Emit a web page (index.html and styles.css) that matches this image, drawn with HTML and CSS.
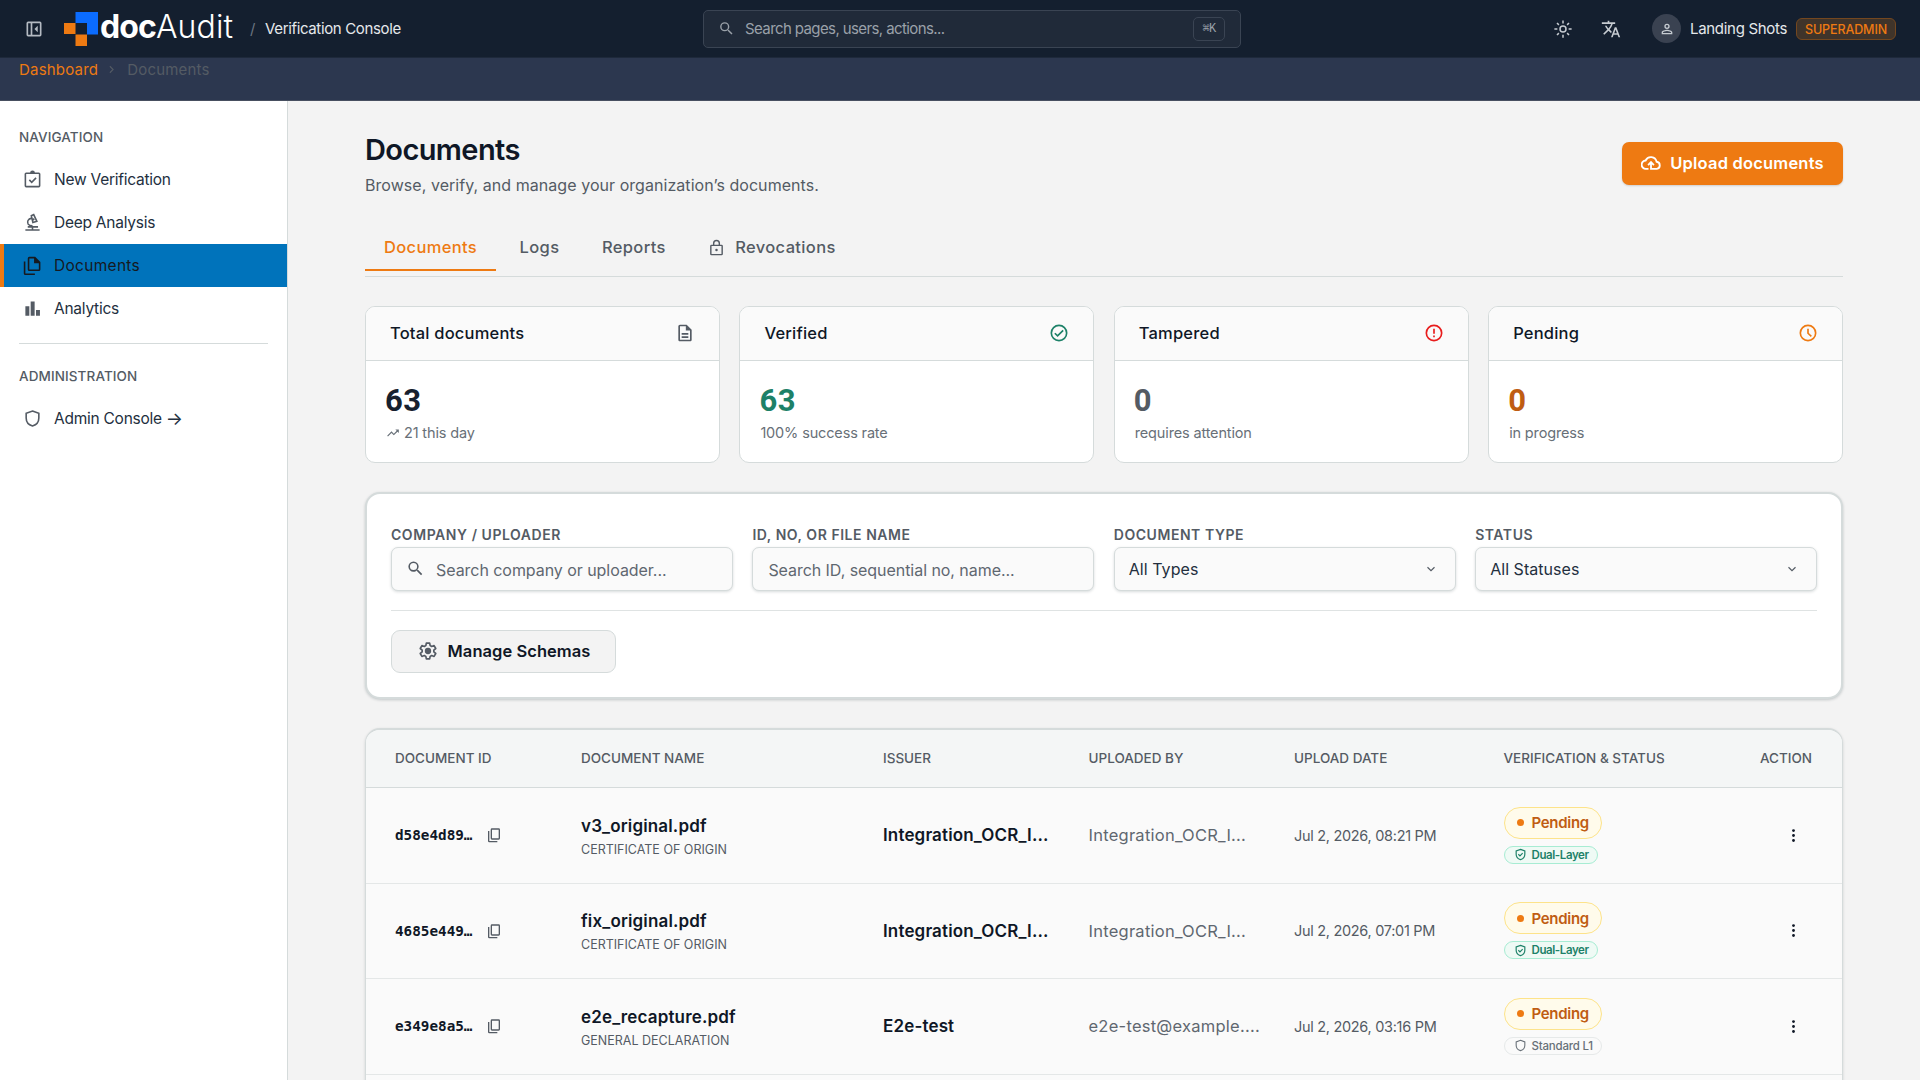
FILE: index.html
```html
<!DOCTYPE html>
<html lang="en">
<head>
  <meta charset="UTF-8" />
  <meta name="viewport" content="width=device-width, initial-scale=1" />
  <title>Documents - docAudit</title>
  <link rel="stylesheet" href="styles.css">
</head>
<body>
  <!-- icon sprite -->
  <svg class="sprite" aria-hidden="true">
    <symbol id="i-panel" viewBox="0 0 24 24"><path fill="none" stroke="currentColor" stroke-width="2" d="M5 4h14a1 1 0 0 1 1 1v14a1 1 0 0 1-1 1H5a1 1 0 0 1-1-1V5a1 1 0 0 1 1-1zM9 4v16"/><path d="M16.5 8v8l-4-4z"/></symbol>
    <symbol id="i-search" viewBox="0 0 24 24"><path d="M15.5 14h-.79l-.28-.27A6.47 6.47 0 0 0 16 9.5 6.5 6.5 0 1 0 9.5 16c1.61 0 3.09-.59 4.23-1.57l.27.28v.79l5 4.99L20.49 19l-4.99-5zm-6 0a4.5 4.5 0 1 1 0-9 4.5 4.5 0 0 1 0 9z"/></symbol>
    <symbol id="i-sun" viewBox="0 0 24 24"><g fill="none" stroke="currentColor" stroke-width="2"><circle cx="12" cy="12" r="4"/><path d="M12 .5v4M12 19.5v4M.5 12h4M19.5 12h4M4 4l2.5 2.5M17.5 17.5L20 20M4 20l2.5-2.5M17.5 6.5L20 4"/></g></symbol>
    <symbol id="i-translate" viewBox="0 0 24 24"><path d="M12.87 15.07l-2.54-2.51.03-.03A17.52 17.52 0 0 0 14.07 6H17V4h-7V2H8v2H1v1.99h11.17C11.5 7.92 10.44 9.75 9 11.35 8.07 10.32 7.3 9.19 6.69 8h-2c.73 1.63 1.73 3.17 2.98 4.56l-5.09 5.02L4 19l5-5 3.11 3.11.76-2.04zM18.5 10h-2L12 22h2l1.12-3h4.75L21 22h2l-4.5-12zm-2.62 7l1.62-4.33L19.12 17h-3.24z"/></symbol>
    <symbol id="i-person" viewBox="0 0 24 24"><path d="M12 4a4 4 0 1 0 0 8 4 4 0 0 0 0-8zm0 6a2 2 0 1 1 0-4 2 2 0 0 1 0 4zm0 3c-2.67 0-8 1.34-8 4v3h16v-3c0-2.66-5.33-4-8-4zm6 5H6v-.99c.2-.72 3.3-2.01 6-2.01s5.8 1.29 6 2v1z"/></symbol>
    <symbol id="i-clipboard" viewBox="0 0 24 24"><path fill="none" stroke="currentColor" stroke-width="2" d="M4 4h16a1 1 0 0 1 1 1v15a1 1 0 0 1-1 1H4a1 1 0 0 1-1-1V5a1 1 0 0 1 1-1zM8 12.5l3 3 5.5-5.5"/><path d="M9 3.5a3 3 0 0 1 6 0L15.5 5h-7z"/></symbol>
    <symbol id="i-microscope" viewBox="0 0 24 24"><path fill="none" stroke="currentColor" stroke-width="2" d="M3 21.5h18M6 17.5h13M12 17v4M10.5 3.5l3-1.5 4 8.5-5 1.5zM11 6.5c-5 1-6 4.5-4.5 7.5 1 1.5 2.5 2 5.5 2"/><circle cx="13" cy="8" r="1.5"/></symbol>
    <symbol id="i-files" viewBox="0 0 24 24"><path fill="none" stroke="currentColor" stroke-width="2" d="M8 2h7l6 6v9a1 1 0 0 1-1 1H8a1 1 0 0 1-1-1V3a1 1 0 0 1 1-1zM2 7v15a1 1 0 0 0 1 1h12"/><path d="M14 1.5l7.5 7.5H14z"/></symbol>
    <symbol id="i-bars" viewBox="0 0 24 24"><path d="M3 9h5v12H3zM9.7 3h5v18h-5zM16.4 14h5v7h-5z"/></symbol>
    <symbol id="i-shield" viewBox="0 0 24 24"><path fill="none" stroke="currentColor" stroke-width="2" d="M12 2.5l8 3v6c0 5-3.3 8.7-8 10-4.7-1.3-8-5-8-10v-6z"/></symbol>
    <symbol id="i-shield-check" viewBox="0 0 24 24"><path fill="none" stroke="currentColor" stroke-width="2.2" d="M12 2.5l8 3v6c0 5-3.3 8.7-8 10-4.7-1.3-8-5-8-10v-6zM8 11.5l3 3 5-5"/></symbol>
    <symbol id="i-upload" viewBox="0 0 24 24"><path fill="none" stroke="currentColor" stroke-width="2.2" d="M9 19H6a5 5 0 0 1-.5-10A7 7 0 0 1 18.7 10.5 4.3 4.3 0 0 1 19 19h-7v-8M8.5 14.5L12 11l3.5 3.5"/></symbol>
    <symbol id="i-lock" viewBox="0 0 24 24"><path fill="none" stroke="currentColor" stroke-width="2" d="M5 9h14a1 1 0 0 1 1 1v11a1 1 0 0 1-1 1H5a1 1 0 0 1-1-1V10a1 1 0 0 1 1-1zM8 9V6a4 4 0 0 1 8 0v3"/><circle cx="12" cy="15.5" r="1.8"/></symbol>
    <symbol id="i-doc" viewBox="0 0 24 24"><path d="M8 16h8v2H8zm0-4h8v2H8zm6-10H6c-1.1 0-2 .9-2 2v16c0 1.1.89 2 1.99 2H18c1.1 0 2-.9 2-2V8l-6-6zm4 18H6V4h7v5h5v11z"/></symbol>
    <symbol id="i-check" viewBox="0 0 24 24"><path fill="none" stroke="currentColor" stroke-width="2" d="M7 12.3l3.3 3.2L17 8.8"/><circle cx="12" cy="12" r="9.2" fill="none" stroke="currentColor" stroke-width="2"/></symbol>
    <symbol id="i-alert" viewBox="0 0 24 24"><circle cx="12" cy="12" r="9.2" fill="none" stroke="currentColor" stroke-width="2"/><path d="M11 7h2v6h-2zM11 15h2v2h-2z"/></symbol>
    <symbol id="i-clock" viewBox="0 0 24 24"><path fill="none" stroke="currentColor" stroke-width="2" d="M12 7v5.3l4 3.7"/><circle cx="12" cy="12" r="9.2" fill="none" stroke="currentColor" stroke-width="2"/></symbol>
    <symbol id="i-trend" viewBox="0 0 24 24"><path d="M16 6l2.29 2.29-4.88 4.88-4-4L2 16.59 3.41 18l6-6 4 4 6.3-6.29L22 12V6z"/></symbol>
    <symbol id="i-gear" viewBox="0 0 24 24"><path fill="none" stroke="currentColor" stroke-width="2" stroke-linejoin="round" d="M10 2.5h4l.6 3 1.8 1 2.9-1 2 3.5-2.3 2v2l2.3 2-2 3.5-2.9-1-1.8 1-.6 3h-4l-.6-3-1.8-1-2.9 1-2-3.5 2.3-2v-2l-2.3-2 2-3.5 2.9 1 1.8-1z"/><circle cx="12" cy="12" r="3.8"/></symbol>
    <symbol id="i-copy" viewBox="0 0 24 24"><path fill="none" stroke="currentColor" stroke-width="2" d="M9 3h10a1 1 0 0 1 1 1v13a1 1 0 0 1-1 1H9a1 1 0 0 1-1-1V4a1 1 0 0 1 1-1zM4 6v15a1 1 0 0 0 1 1h12"/></symbol>
    <symbol id="i-chevron" viewBox="0 0 24 24"><path fill="none" stroke="currentColor" stroke-width="2" d="M6 9l6 6 6-6"/></symbol>
    <symbol id="i-more" viewBox="0 0 24 24"><circle cx="12" cy="5" r="2"/><circle cx="12" cy="12" r="2"/><circle cx="12" cy="19" r="2"/></symbol>
  </svg>

  <header class="topbar">
    <svg class="icon panel-toggle"><use href="#i-panel"/></svg>
    <div class="logo">
      <svg class="logo-mark" viewBox="0 0 34 34">
        <path fill="#0b6cff" d="M11.5 0H34v22.5H23V11H11.5z"/>
        <path fill="#ee7a12" d="M0 11h11.5v11H0zM11.5 22.5H23V34H11.5z"/>
      </svg>
      <span class="logo-text"><b>doc</b><span>Audit</span></span>
    </div>
    <span class="slash">/</span>
    <span class="console-name">Verification Console</span>
    <div class="global-search">
      <svg class="icon"><use href="#i-search"/></svg>
      <span>Search pages, users, actions...</span>
      <kbd>⌘K</kbd>
    </div>
    <div class="topbar-right">
      <svg class="icon"><use href="#i-sun"/></svg>
      <svg class="icon translate"><use href="#i-translate"/></svg>
      <span class="avatar"><svg class="icon"><use href="#i-person"/></svg></span>
      <span class="user-name">Landing Shots</span>
      <span class="role">SUPERADMIN</span>
    </div>
  </header>

  <div class="breadcrumb">
    <a>Dashboard</a>
    <svg class="icon"><use href="#i-chevron"/></svg>
    <span>Documents</span>
  </div>

  <div class="layout">
    <aside class="sidebar">
      <h2 class="nav-title">NAVIGATION</h2>
      <nav>
        <a class="nav-item"><svg class="icon"><use href="#i-clipboard"/></svg>New Verification</a>
        <a class="nav-item"><svg class="icon"><use href="#i-microscope"/></svg>Deep Analysis</a>
        <a class="nav-item active"><svg class="icon"><use href="#i-files"/></svg>Documents</a>
        <a class="nav-item"><svg class="icon"><use href="#i-bars"/></svg>Analytics</a>
      </nav>
      <hr>
      <h2 class="nav-title admin">ADMINISTRATION</h2>
      <nav>
        <a class="nav-item"><svg class="icon"><use href="#i-shield"/></svg>Admin Console <i class="arrow">→</i></a>
      </nav>
    </aside>

    <main class="main">
      <div class="page-head">
        <div>
          <h1>Documents</h1>
          <p>Browse, verify, and manage your organization’s documents.</p>
        </div>
        <button class="btn-upload"><svg class="icon"><use href="#i-upload"/></svg>Upload documents</button>
      </div>

      <div class="tabs">
        <a class="tab active">Documents</a>
        <a class="tab">Logs</a>
        <a class="tab">Reports</a>
        <a class="tab locked"><svg class="icon"><use href="#i-lock"/></svg>Revocations</a>
      </div>

      <section class="stats">
        <div class="card">
          <div class="card-head">Total documents<svg class="icon"><use href="#i-doc"/></svg></div>
          <div class="card-body">
            <strong>63</strong>
            <small><svg class="icon"><use href="#i-trend"/></svg>21 this day</small>
          </div>
        </div>
        <div class="card verified">
          <div class="card-head">Verified<svg class="icon"><use href="#i-check"/></svg></div>
          <div class="card-body">
            <strong>63</strong>
            <small>100% success rate</small>
          </div>
        </div>
        <div class="card tampered">
          <div class="card-head">Tampered<svg class="icon"><use href="#i-alert"/></svg></div>
          <div class="card-body">
            <strong>0</strong>
            <small>requires attention</small>
          </div>
        </div>
        <div class="card pending">
          <div class="card-head">Pending<svg class="icon"><use href="#i-clock"/></svg></div>
          <div class="card-body">
            <strong>0</strong>
            <small>in progress</small>
          </div>
        </div>
      </section>

      <section class="filters">
        <div class="filter-grid">
          <div class="field">
            <label>COMPANY / UPLOADER</label>
            <div class="control"><svg class="icon"><use href="#i-search"/></svg><span class="placeholder">Search company or uploader...</span></div>
          </div>
          <div class="field">
            <label>ID, NO, OR FILE NAME</label>
            <div class="control"><span class="placeholder">Search ID, sequential no, name...</span></div>
          </div>
          <div class="field">
            <label>DOCUMENT TYPE</label>
            <div class="control select">All Types<svg class="icon"><use href="#i-chevron"/></svg></div>
          </div>
          <div class="field">
            <label>STATUS</label>
            <div class="control select">All Statuses<svg class="icon"><use href="#i-chevron"/></svg></div>
          </div>
        </div>
        <div class="filter-actions">
          <button class="btn-schemas"><svg class="icon"><use href="#i-gear"/></svg>Manage Schemas</button>
        </div>
      </section>

      <section class="doc-table">
        <div class="row head">
          <span>DOCUMENT ID</span>
          <span>DOCUMENT NAME</span>
          <span>ISSUER</span>
          <span>UPLOADED BY</span>
          <span>UPLOAD DATE</span>
          <span>VERIFICATION &amp; STATUS</span>
          <span class="action">ACTION</span>
        </div>
        <div class="row">
          <div class="doc-id"><code>d58e4d89…</code><svg class="icon"><use href="#i-copy"/></svg></div>
          <div class="doc-name"><b>v3_original.pdf</b><small>CERTIFICATE OF ORIGIN</small></div>
          <div class="issuer">Integration_OCR_I...</div>
          <div class="uploader">Integration_OCR_I...</div>
          <div class="date">Jul 2, 2026, 08:21 PM</div>
          <div class="status"><span class="badge">Pending</span><span class="layer dual"><svg class="icon"><use href="#i-shield-check"/></svg>Dual-Layer</span></div>
          <div class="action"><svg class="icon"><use href="#i-more"/></svg></div>
        </div>
        <div class="row">
          <div class="doc-id"><code>4685e449…</code><svg class="icon"><use href="#i-copy"/></svg></div>
          <div class="doc-name"><b>fix_original.pdf</b><small>CERTIFICATE OF ORIGIN</small></div>
          <div class="issuer">Integration_OCR_I...</div>
          <div class="uploader">Integration_OCR_I...</div>
          <div class="date">Jul 2, 2026, 07:01 PM</div>
          <div class="status"><span class="badge">Pending</span><span class="layer dual"><svg class="icon"><use href="#i-shield-check"/></svg>Dual-Layer</span></div>
          <div class="action"><svg class="icon"><use href="#i-more"/></svg></div>
        </div>
        <div class="row">
          <div class="doc-id"><code>e349e8a5…</code><svg class="icon"><use href="#i-copy"/></svg></div>
          <div class="doc-name"><b>e2e_recapture.pdf</b><small>GENERAL DECLARATION</small></div>
          <div class="issuer">E2e-test</div>
          <div class="uploader">e2e-test@example....</div>
          <div class="date">Jul 2, 2026, 03:16 PM</div>
          <div class="status"><span class="badge">Pending</span><span class="layer"><svg class="icon"><use href="#i-shield"/></svg>Standard L1</span></div>
          <div class="action"><svg class="icon"><use href="#i-more"/></svg></div>
        </div>
      </section>
    </main>
  </div>
</body>
</html>
```

FILE: styles.css
```css
* {
  box-sizing: border-box;
}
body {
  margin: 0;
  height: 1080px;
  overflow: hidden;
  font-family: Inter, "Open Sans", sans-serif;
  font-size: 16px;
  color: #0f1726;
  background-color: #f3f3f3;
}
h1, h2, p {
  margin: 0;
}
button {
  font-family: inherit;
}
.sprite {
  display: none;
}
.icon {
  width: 20px;
  height: 20px;
  fill: currentColor;
  flex-shrink: 0;
}

/* Top bar */
.topbar {
  display: flex;
  align-items: center;
  height: 58px;
  padding: 0 24px;
  background-color: #141f2f;
  border-bottom: 1px solid #1e293b;
  color: #e5e8eb;
}
.panel-toggle {
  color: #b4bac2;
}
.logo {
  display: flex;
  align-items: center;
  gap: 2px;
  width: 170px;
  margin-left: 20px;
}
.logo-mark {
  width: 34px;
  height: 34px;
  flex-shrink: 0;
}
.logo-text {
  font-size: 32px;
  line-height: 34px;
  letter-spacing: -0.9px;
  color: #fff;
  white-space: nowrap;
  padding-bottom: 3px;
}
.logo-text span {
  font-weight: 300;
  letter-spacing: 0.1px;
}
.slash {
  width: 15px;
  margin-left: 16px;
  font-size: 15px;
  color: #6b7480;
}
.console-name {
  width: 438px;
  font-size: 15px;
  letter-spacing: -0.35px;
}
.global-search {
  display: flex;
  align-items: center;
  width: 538px;
  height: 38px;
  padding: 0 15px 0 14px;
  font-size: 15px;
  letter-spacing: -0.6px;
  color: #9aa1a9;
  background-color: #202a39;
  border: 1px solid #3a4453;
  border-radius: 5px;
}
.global-search .icon {
  width: 17px;
  height: 17px;
  margin-right: 10px;
}
.global-search kbd {
  margin-left: auto;
  width: 32px;
  height: 24px;
  line-height: 22px;
  text-align: center;
  font-family: "Liberation Mono", monospace;
  font-size: 12px;
  border: 1px solid #3a4453;
  border-radius: 5px;
}
.topbar-right {
  display: flex;
  align-items: center;
  margin-left: auto;
  color: #c6cbd1;
}
.topbar-right .icon {
  width: 18px;
  height: 18px;
}
.topbar-right .translate {
  width: 20px;
  height: 20px;
  margin: 0 31px 0 29px;
}
.avatar {
  display: flex;
  align-items: center;
  justify-content: center;
  width: 29px;
  height: 29px;
  border-radius: 50%;
  background-color: #3a4251;
}
.topbar-right .avatar .icon {
  width: 16px;
  height: 16px;
}
.user-name {
  width: 115px;
  padding-left: 9px;
  font-size: 15px;
  letter-spacing: -0.3px;
  white-space: nowrap;
  color: #e5e8eb;
}
.role {
  width: 100px;
  height: 22px;
  line-height: 21px;
  text-align: center;
  font-size: 12.5px;
  font-weight: 500;
  letter-spacing: -0.1px;
  color: #ee7a12;
  background-color: #40342a;
  border: 1px solid #74471f;
  border-radius: 6px;
}

/* Breadcrumb */
.breadcrumb {
  display: flex;
  align-items: center;
  height: 43px;
  padding: 0 19px 20px;
  font-size: 15px;
  letter-spacing: 0.2px;
  color: #545b64;
  background-color: #2c374f;
  border-bottom: 1px solid #474f60;
}
.breadcrumb a {
  color: #ee7a12;
}
.breadcrumb .icon {
  width: 13px;
  height: 13px;
  margin: 0 9px 0 7px;
  transform: rotate(-90deg);
}

.layout {
  display: flex;
  height: 979px;
  overflow: hidden;
}

/* Sidebar */
.sidebar {
  width: 288px;
  flex-shrink: 0;
  padding-top: 28px;
  background-color: #fff;
  border-right: 1px solid #d5dbdb;
}
.nav-title {
  height: 29px;
  padding-left: 19px;
  font-size: 13.5px;
  line-height: 17px;
  font-weight: 500;
  letter-spacing: 0.1px;
  color: #545b64;
}
.nav-item {
  display: flex;
  align-items: center;
  height: 43px;
  padding: 0 0 1px 23px;
  font-size: 15.5px;
  letter-spacing: -0.25px;
  color: #232f3e;
}
.nav-item .icon {
  width: 19px;
  height: 19px;
  margin-right: 12px;
  color: #545b64;
}
.nav-item.active {
  padding-left: 19px;
  border-left: 4px solid #ee7a12;
  letter-spacing: 0.3px;
  color: #16191f;
  background-color: #0073bb;
}
.nav-item.active .icon {
  color: #16191f;
}
.arrow {
  margin-left: 4px;
  font-size: 18px;
  font-style: normal;
}
.sidebar hr {
  margin: 13px 19px 0;
  border: 0;
  border-top: 1px solid #d5dbdb;
}
.nav-title.admin {
  height: 53px;
  padding-top: 24px;
}

/* Main column */
.main {
  flex: 1;
  padding: 30px 77px 0;
}
.page-head {
  display: flex;
  justify-content: space-between;
  height: 95px;
}
h1 {
  font-size: 29px;
  line-height: 37px;
  font-weight: 600;
  letter-spacing: -0.6px;
}
.page-head p {
  margin-top: 5px;
  line-height: 24px;
  font-size: 16px;
  letter-spacing: 0.05px;
  color: #545b64;
}
.btn-upload {
  display: flex;
  align-items: center;
  justify-content: center;
  gap: 9px;
  width: 221px;
  height: 43px;
  margin-top: 11px;
  padding-bottom: 2px;
  font-size: 16.5px;
  font-weight: 600;
  letter-spacing: 0.2px;
  color: #fff;
  background-color: #ee7a12;
  border: 0;
  border-radius: 7px;
  box-shadow: 0 1px 2px rgba(0,0,0,0.15);
}
.tabs {
  display: flex;
  height: 51px;
  gap: 4.5px;
  border-bottom: 1px solid #d5dbdb;
}
.tab {
  display: flex;
  align-items: center;
  height: 45px;
  padding: 0 19px 3px;
  font-size: 16.5px;
  font-weight: 500;
  letter-spacing: 0.35px;
  color: #545b64;
}
.tab.active {
  padding-bottom: 1px;
  color: #ee7a12;
  border-bottom: 2px solid #ee7a12;
}
.tab .icon {
  width: 17px;
  height: 17px;
  margin-right: 10px;
}

/* Stat cards */
.stats {
  display: grid;
  grid-template-columns: repeat(4, 1fr);
  gap: 19.5px;
  margin-top: 29px;
}
.card {
  height: 157px;
  background-color: #fff;
  border: 1px solid #d5dbdb;
  border-radius: 10px;
  overflow: hidden;
}
.card-head {
  display: flex;
  align-items: center;
  justify-content: space-between;
  height: 54px;
  padding: 0 24px 1px;
  font-size: 16.5px;
  font-weight: 500;
  letter-spacing: 0.2px;
  background-color: #fafafa;
  border-bottom: 1px solid #d5dbdb;
}
.card-head .icon {
  color: #545b64;
}
.card-body {
  padding: 21px 19px;
}
.card-body strong {
  display: block;
  font-family: Roboto, sans-serif;
  font-size: 31px;
  line-height: 38px;
  letter-spacing: 0.5px;
  color: #16202e;
}
.card-body small {
  display: flex;
  align-items: center;
  margin-top: 3px;
  padding-left: 1px;
  font-size: 14.5px;
  line-height: 20px;
  letter-spacing: -0.15px;
  color: #687078;
}
.card-body .icon {
  width: 14px;
  height: 14px;
  margin-right: 4px;
}
.verified strong, .verified .icon {
  color: #1d8168;
}
.tampered strong {
  color: #545b64;
}
.tampered .icon {
  color: #e81c1c;
}
.pending strong {
  color: #bf5d13;
}
.pending .icon {
  color: #ee7a12;
}

/* Filters */
.filters {
  height: 207px;
  margin-top: 29px;
  padding: 32px 24px 0;
  background-color: #fff;
  border: 2px solid #d5dbdb;
  border-radius: 15px;
  box-shadow: 0 1px 3px rgba(0,28,36,0.2);
}
.filter-grid {
  display: grid;
  grid-template-columns: repeat(4, 1fr);
  gap: 19.5px;
  padding-bottom: 19px;
  border-bottom: 1px solid #dfe3e3;
}
.field label {
  display: block;
  height: 21px;
  line-height: 18px;
  font-size: 14px;
  font-weight: 600;
  letter-spacing: 0.55px;
  color: #545b64;
}
.control {
  display: flex;
  align-items: center;
  height: 44px;
  padding: 0 15px 1px;
  font-size: 16px;
  letter-spacing: -0.05px;
  color: #232f3e;
  background-color: #fafafa;
  border: 1px solid #d5dbdb;
  border-radius: 7px;
  box-shadow: 0 1px 3px rgba(0,28,36,0.16);
}
.control .icon {
  width: 19px;
  height: 19px;
  margin: 0 11px 0 -1px;
  color: #545b64;
}
.placeholder {
  padding-top: 2px;
  color: #5f6770;
}
.select {
  padding-left: 14px;
  letter-spacing: 0.05px;
}
.select .icon {
  width: 14px;
  height: 14px;
  margin: 0 2px 0 auto;
}
.filter-actions {
  padding-top: 19px;
}
.btn-schemas {
  display: flex;
  align-items: center;
  justify-content: center;
  gap: 10px;
  width: 225px;
  height: 43px;
  padding: 1px 6px 2px 7px;
  font-size: 16.5px;
  font-weight: 600;
  letter-spacing: 0.05px;
  color: #0f1726;
  background-color: #f3f3f3;
  border: 1px solid #d5dbdb;
  border-radius: 9px;
}
.btn-schemas .icon {
  color: #545b64;
}

/* Documents table */
.doc-table {
  height: 400px;
  margin-top: 29px;
  background-color: #fafafa;
  border: 1px solid #d5dbdb;
  border-top-width: 2px;
  border-radius: 15px;
  overflow: hidden;
  box-shadow: 0 1px 3px rgba(0,28,36,0.15);
}
.row {
  display: grid;
  grid-template-columns: 186px 302px 205.5px 205.5px 209.5px 1fr 60px;
  align-items: center;
  height: 95.5px;
  padding: 0 30px 0 29px;
  border-bottom: 1px solid #e4e7e7;
  white-space: nowrap;
}
.row.head {
  height: 58px;
  padding-bottom: 1px;
  font-size: 13.5px;
  font-weight: 500;
  letter-spacing: 0;
  color: #545b64;
  background-color: #f4f6f6;
  border-color: #d5dbdb;
}
.doc-id {
  display: flex;
  align-items: center;
}
.doc-id code {
  width: 91px;
  font-family: "DejaVu Sans Mono", monospace;
  font-size: 14.3px;
  font-weight: 700;
}
.doc-id .icon {
  width: 16px;
  height: 16px;
  color: #545b64;
}
.doc-name b {
  display: block;
  padding-top: 3px;
  font-size: 17px;
  line-height: 24px;
  font-weight: 600;
  letter-spacing: 0.15px;
}
.doc-name small {
  display: block;
  font-size: 12.5px;
  line-height: 20px;
  color: #545b64;
  padding-top: 2px;
}
.issuer {
  font-size: 17px;
  font-weight: 600;
  letter-spacing: 0.15px;
}
.uploader {
  font-size: 16.5px;
  letter-spacing: 0.25px;
  color: #5f6770;
}
.date {
  font-size: 14.5px;
  letter-spacing: -0.3px;
  color: #545b64;
}
.status {
  display: flex;
  flex-direction: column;
  align-items: flex-start;
  gap: 7px;
}
.badge {
  display: flex;
  align-items: center;
  height: 32px;
  width: 98px;
  padding-left: 12px;
  font-size: 15px;
  font-weight: 600;
  letter-spacing: -0.3px;
  color: #bf5d13;
  background-color: #fffbeb;
  border: 1.5px solid #fde38a;
  border-radius: 16px;
}
.badge::before {
  content: "";
  width: 7px;
  height: 7px;
  margin-right: 8px;
  border-radius: 50%;
  background-color: #ee7a12;
}
.layer {
  display: flex;
  align-items: center;
  height: 18px;
  padding: 0 8px 0 9px;
  font-size: 11.5px;
  font-weight: 500;
  letter-spacing: -0.2px;
  color: #687078;
  border: 1px solid #e6e9e9;
  border-radius: 9px;
}
.layer .icon {
  width: 13px;
  height: 13px;
  margin-right: 5px;
}
.layer.dual {
  font-weight: 600;
  letter-spacing: -0.4px;
  color: #1d8168;
  background-color: #effaf5;
  border-color: #a7ecd3;
}
.action {
  display: flex;
  justify-content: flex-end;
}
.action .icon {
  width: 17px;
  height: 17px;
  margin-right: 10px;
}
```
